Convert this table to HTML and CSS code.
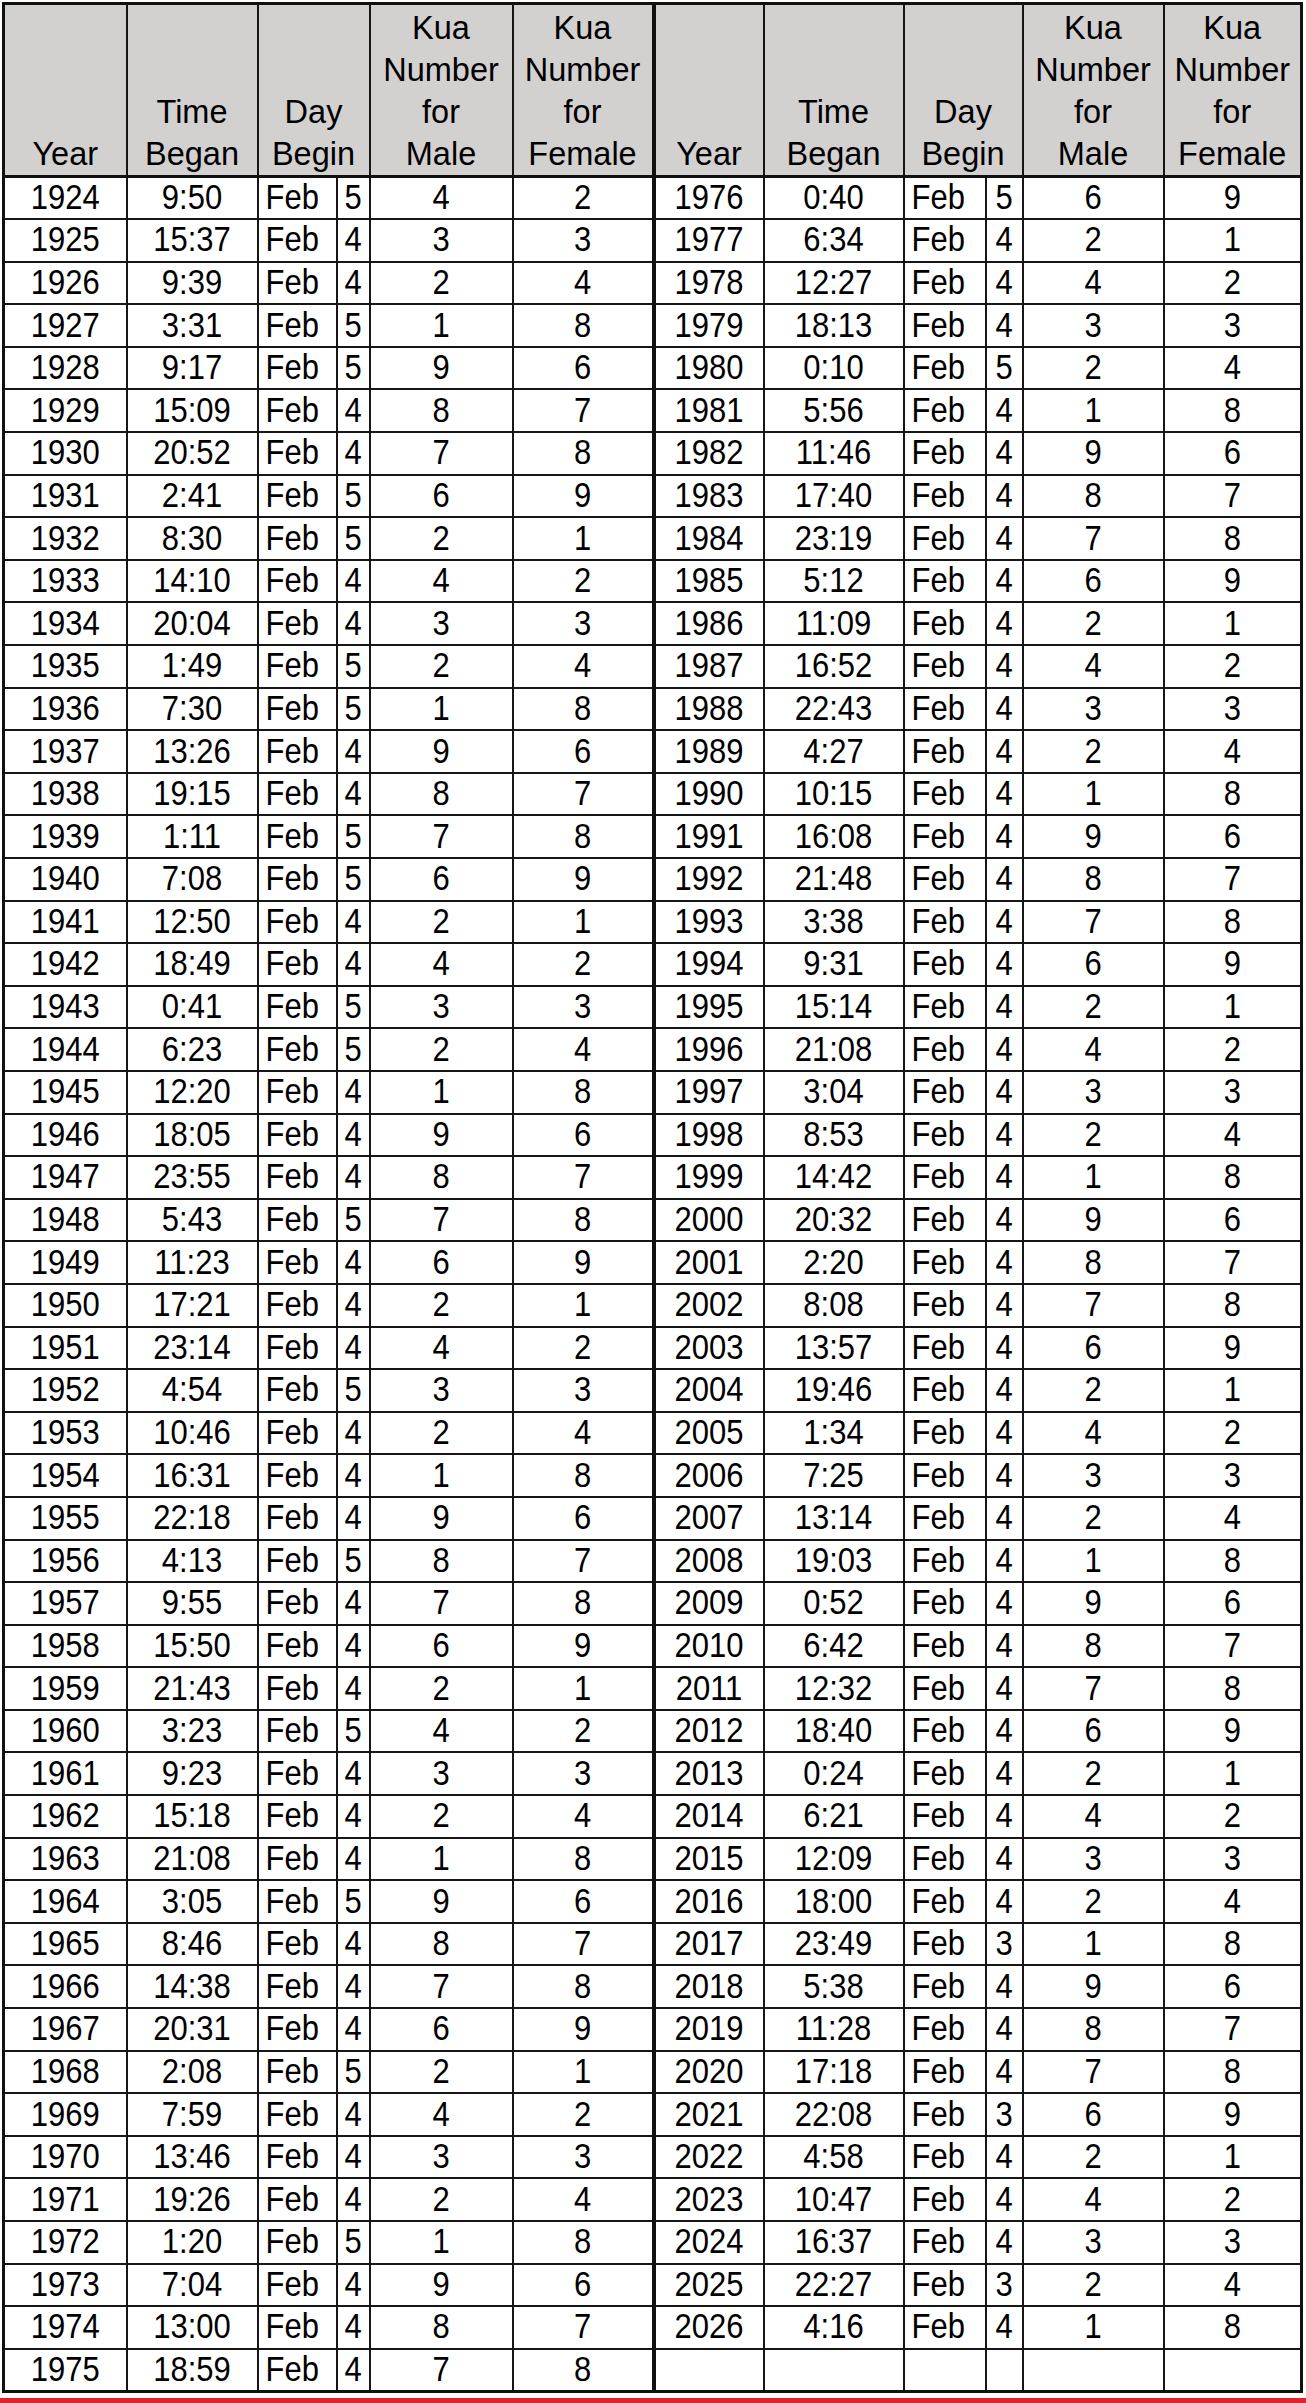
FILE: index.html
```html
<!DOCTYPE html>
<html>
<head>
<meta charset="utf-8">
<title>Kua Number Table</title>
<link rel="stylesheet" href="styles.css">
</head>
<body>
<div class="sheet">
<table class="kua">
<colgroup>
<col class="c-year1"><col class="c-time1"><col class="c-mon1"><col class="c-day1"><col class="c-km1"><col class="c-kf1">
<col class="c-year2"><col class="c-time2"><col class="c-mon2"><col class="c-day2"><col class="c-km2"><col class="c-kf2">
</colgroup>
<thead>
<tr class="head">
<th>Year</th><th>Time<br>Began</th><th colspan="2">Day<br>Begin</th><th>Kua<br>Number<br>for<br>Male</th><th>Kua<br>Number<br>for<br>Female</th>
<th class="rs">Year</th><th>Time<br>Began</th><th colspan="2">Day<br>Begin</th><th>Kua<br>Number<br>for<br>Male</th><th>Kua<br>Number<br>for<br>Female</th>
</tr>
</thead>
<tbody>
<tr><td><span class="v">1924</span></td><td><span class="v">9:50</span></td><td class="mon"><span class="v">Feb</span></td><td><span class="v">5</span></td><td><span class="v">4</span></td><td><span class="v">2</span></td><td class="rs"><span class="v">1976</span></td><td><span class="v">0:40</span></td><td class="mon"><span class="v">Feb</span></td><td><span class="v">5</span></td><td><span class="v">6</span></td><td><span class="v">9</span></td></tr>
<tr><td><span class="v">1925</span></td><td><span class="v">15:37</span></td><td class="mon"><span class="v">Feb</span></td><td><span class="v">4</span></td><td><span class="v">3</span></td><td><span class="v">3</span></td><td class="rs"><span class="v">1977</span></td><td><span class="v">6:34</span></td><td class="mon"><span class="v">Feb</span></td><td><span class="v">4</span></td><td><span class="v">2</span></td><td><span class="v">1</span></td></tr>
<tr><td><span class="v">1926</span></td><td><span class="v">9:39</span></td><td class="mon"><span class="v">Feb</span></td><td><span class="v">4</span></td><td><span class="v">2</span></td><td><span class="v">4</span></td><td class="rs"><span class="v">1978</span></td><td><span class="v">12:27</span></td><td class="mon"><span class="v">Feb</span></td><td><span class="v">4</span></td><td><span class="v">4</span></td><td><span class="v">2</span></td></tr>
<tr><td><span class="v">1927</span></td><td><span class="v">3:31</span></td><td class="mon"><span class="v">Feb</span></td><td><span class="v">5</span></td><td><span class="v">1</span></td><td><span class="v">8</span></td><td class="rs"><span class="v">1979</span></td><td><span class="v">18:13</span></td><td class="mon"><span class="v">Feb</span></td><td><span class="v">4</span></td><td><span class="v">3</span></td><td><span class="v">3</span></td></tr>
<tr><td><span class="v">1928</span></td><td><span class="v">9:17</span></td><td class="mon"><span class="v">Feb</span></td><td><span class="v">5</span></td><td><span class="v">9</span></td><td><span class="v">6</span></td><td class="rs"><span class="v">1980</span></td><td><span class="v">0:10</span></td><td class="mon"><span class="v">Feb</span></td><td><span class="v">5</span></td><td><span class="v">2</span></td><td><span class="v">4</span></td></tr>
<tr><td><span class="v">1929</span></td><td><span class="v">15:09</span></td><td class="mon"><span class="v">Feb</span></td><td><span class="v">4</span></td><td><span class="v">8</span></td><td><span class="v">7</span></td><td class="rs"><span class="v">1981</span></td><td><span class="v">5:56</span></td><td class="mon"><span class="v">Feb</span></td><td><span class="v">4</span></td><td><span class="v">1</span></td><td><span class="v">8</span></td></tr>
<tr><td><span class="v">1930</span></td><td><span class="v">20:52</span></td><td class="mon"><span class="v">Feb</span></td><td><span class="v">4</span></td><td><span class="v">7</span></td><td><span class="v">8</span></td><td class="rs"><span class="v">1982</span></td><td><span class="v">11:46</span></td><td class="mon"><span class="v">Feb</span></td><td><span class="v">4</span></td><td><span class="v">9</span></td><td><span class="v">6</span></td></tr>
<tr><td><span class="v">1931</span></td><td><span class="v">2:41</span></td><td class="mon"><span class="v">Feb</span></td><td><span class="v">5</span></td><td><span class="v">6</span></td><td><span class="v">9</span></td><td class="rs"><span class="v">1983</span></td><td><span class="v">17:40</span></td><td class="mon"><span class="v">Feb</span></td><td><span class="v">4</span></td><td><span class="v">8</span></td><td><span class="v">7</span></td></tr>
<tr><td><span class="v">1932</span></td><td><span class="v">8:30</span></td><td class="mon"><span class="v">Feb</span></td><td><span class="v">5</span></td><td><span class="v">2</span></td><td><span class="v">1</span></td><td class="rs"><span class="v">1984</span></td><td><span class="v">23:19</span></td><td class="mon"><span class="v">Feb</span></td><td><span class="v">4</span></td><td><span class="v">7</span></td><td><span class="v">8</span></td></tr>
<tr><td><span class="v">1933</span></td><td><span class="v">14:10</span></td><td class="mon"><span class="v">Feb</span></td><td><span class="v">4</span></td><td><span class="v">4</span></td><td><span class="v">2</span></td><td class="rs"><span class="v">1985</span></td><td><span class="v">5:12</span></td><td class="mon"><span class="v">Feb</span></td><td><span class="v">4</span></td><td><span class="v">6</span></td><td><span class="v">9</span></td></tr>
<tr><td><span class="v">1934</span></td><td><span class="v">20:04</span></td><td class="mon"><span class="v">Feb</span></td><td><span class="v">4</span></td><td><span class="v">3</span></td><td><span class="v">3</span></td><td class="rs"><span class="v">1986</span></td><td><span class="v">11:09</span></td><td class="mon"><span class="v">Feb</span></td><td><span class="v">4</span></td><td><span class="v">2</span></td><td><span class="v">1</span></td></tr>
<tr><td><span class="v">1935</span></td><td><span class="v">1:49</span></td><td class="mon"><span class="v">Feb</span></td><td><span class="v">5</span></td><td><span class="v">2</span></td><td><span class="v">4</span></td><td class="rs"><span class="v">1987</span></td><td><span class="v">16:52</span></td><td class="mon"><span class="v">Feb</span></td><td><span class="v">4</span></td><td><span class="v">4</span></td><td><span class="v">2</span></td></tr>
<tr><td><span class="v">1936</span></td><td><span class="v">7:30</span></td><td class="mon"><span class="v">Feb</span></td><td><span class="v">5</span></td><td><span class="v">1</span></td><td><span class="v">8</span></td><td class="rs"><span class="v">1988</span></td><td><span class="v">22:43</span></td><td class="mon"><span class="v">Feb</span></td><td><span class="v">4</span></td><td><span class="v">3</span></td><td><span class="v">3</span></td></tr>
<tr><td><span class="v">1937</span></td><td><span class="v">13:26</span></td><td class="mon"><span class="v">Feb</span></td><td><span class="v">4</span></td><td><span class="v">9</span></td><td><span class="v">6</span></td><td class="rs"><span class="v">1989</span></td><td><span class="v">4:27</span></td><td class="mon"><span class="v">Feb</span></td><td><span class="v">4</span></td><td><span class="v">2</span></td><td><span class="v">4</span></td></tr>
<tr><td><span class="v">1938</span></td><td><span class="v">19:15</span></td><td class="mon"><span class="v">Feb</span></td><td><span class="v">4</span></td><td><span class="v">8</span></td><td><span class="v">7</span></td><td class="rs"><span class="v">1990</span></td><td><span class="v">10:15</span></td><td class="mon"><span class="v">Feb</span></td><td><span class="v">4</span></td><td><span class="v">1</span></td><td><span class="v">8</span></td></tr>
<tr><td><span class="v">1939</span></td><td><span class="v">1:11</span></td><td class="mon"><span class="v">Feb</span></td><td><span class="v">5</span></td><td><span class="v">7</span></td><td><span class="v">8</span></td><td class="rs"><span class="v">1991</span></td><td><span class="v">16:08</span></td><td class="mon"><span class="v">Feb</span></td><td><span class="v">4</span></td><td><span class="v">9</span></td><td><span class="v">6</span></td></tr>
<tr><td><span class="v">1940</span></td><td><span class="v">7:08</span></td><td class="mon"><span class="v">Feb</span></td><td><span class="v">5</span></td><td><span class="v">6</span></td><td><span class="v">9</span></td><td class="rs"><span class="v">1992</span></td><td><span class="v">21:48</span></td><td class="mon"><span class="v">Feb</span></td><td><span class="v">4</span></td><td><span class="v">8</span></td><td><span class="v">7</span></td></tr>
<tr><td><span class="v">1941</span></td><td><span class="v">12:50</span></td><td class="mon"><span class="v">Feb</span></td><td><span class="v">4</span></td><td><span class="v">2</span></td><td><span class="v">1</span></td><td class="rs"><span class="v">1993</span></td><td><span class="v">3:38</span></td><td class="mon"><span class="v">Feb</span></td><td><span class="v">4</span></td><td><span class="v">7</span></td><td><span class="v">8</span></td></tr>
<tr><td><span class="v">1942</span></td><td><span class="v">18:49</span></td><td class="mon"><span class="v">Feb</span></td><td><span class="v">4</span></td><td><span class="v">4</span></td><td><span class="v">2</span></td><td class="rs"><span class="v">1994</span></td><td><span class="v">9:31</span></td><td class="mon"><span class="v">Feb</span></td><td><span class="v">4</span></td><td><span class="v">6</span></td><td><span class="v">9</span></td></tr>
<tr><td><span class="v">1943</span></td><td><span class="v">0:41</span></td><td class="mon"><span class="v">Feb</span></td><td><span class="v">5</span></td><td><span class="v">3</span></td><td><span class="v">3</span></td><td class="rs"><span class="v">1995</span></td><td><span class="v">15:14</span></td><td class="mon"><span class="v">Feb</span></td><td><span class="v">4</span></td><td><span class="v">2</span></td><td><span class="v">1</span></td></tr>
<tr><td><span class="v">1944</span></td><td><span class="v">6:23</span></td><td class="mon"><span class="v">Feb</span></td><td><span class="v">5</span></td><td><span class="v">2</span></td><td><span class="v">4</span></td><td class="rs"><span class="v">1996</span></td><td><span class="v">21:08</span></td><td class="mon"><span class="v">Feb</span></td><td><span class="v">4</span></td><td><span class="v">4</span></td><td><span class="v">2</span></td></tr>
<tr><td><span class="v">1945</span></td><td><span class="v">12:20</span></td><td class="mon"><span class="v">Feb</span></td><td><span class="v">4</span></td><td><span class="v">1</span></td><td><span class="v">8</span></td><td class="rs"><span class="v">1997</span></td><td><span class="v">3:04</span></td><td class="mon"><span class="v">Feb</span></td><td><span class="v">4</span></td><td><span class="v">3</span></td><td><span class="v">3</span></td></tr>
<tr><td><span class="v">1946</span></td><td><span class="v">18:05</span></td><td class="mon"><span class="v">Feb</span></td><td><span class="v">4</span></td><td><span class="v">9</span></td><td><span class="v">6</span></td><td class="rs"><span class="v">1998</span></td><td><span class="v">8:53</span></td><td class="mon"><span class="v">Feb</span></td><td><span class="v">4</span></td><td><span class="v">2</span></td><td><span class="v">4</span></td></tr>
<tr><td><span class="v">1947</span></td><td><span class="v">23:55</span></td><td class="mon"><span class="v">Feb</span></td><td><span class="v">4</span></td><td><span class="v">8</span></td><td><span class="v">7</span></td><td class="rs"><span class="v">1999</span></td><td><span class="v">14:42</span></td><td class="mon"><span class="v">Feb</span></td><td><span class="v">4</span></td><td><span class="v">1</span></td><td><span class="v">8</span></td></tr>
<tr><td><span class="v">1948</span></td><td><span class="v">5:43</span></td><td class="mon"><span class="v">Feb</span></td><td><span class="v">5</span></td><td><span class="v">7</span></td><td><span class="v">8</span></td><td class="rs"><span class="v">2000</span></td><td><span class="v">20:32</span></td><td class="mon"><span class="v">Feb</span></td><td><span class="v">4</span></td><td><span class="v">9</span></td><td><span class="v">6</span></td></tr>
<tr><td><span class="v">1949</span></td><td><span class="v">11:23</span></td><td class="mon"><span class="v">Feb</span></td><td><span class="v">4</span></td><td><span class="v">6</span></td><td><span class="v">9</span></td><td class="rs"><span class="v">2001</span></td><td><span class="v">2:20</span></td><td class="mon"><span class="v">Feb</span></td><td><span class="v">4</span></td><td><span class="v">8</span></td><td><span class="v">7</span></td></tr>
<tr><td><span class="v">1950</span></td><td><span class="v">17:21</span></td><td class="mon"><span class="v">Feb</span></td><td><span class="v">4</span></td><td><span class="v">2</span></td><td><span class="v">1</span></td><td class="rs"><span class="v">2002</span></td><td><span class="v">8:08</span></td><td class="mon"><span class="v">Feb</span></td><td><span class="v">4</span></td><td><span class="v">7</span></td><td><span class="v">8</span></td></tr>
<tr><td><span class="v">1951</span></td><td><span class="v">23:14</span></td><td class="mon"><span class="v">Feb</span></td><td><span class="v">4</span></td><td><span class="v">4</span></td><td><span class="v">2</span></td><td class="rs"><span class="v">2003</span></td><td><span class="v">13:57</span></td><td class="mon"><span class="v">Feb</span></td><td><span class="v">4</span></td><td><span class="v">6</span></td><td><span class="v">9</span></td></tr>
<tr><td><span class="v">1952</span></td><td><span class="v">4:54</span></td><td class="mon"><span class="v">Feb</span></td><td><span class="v">5</span></td><td><span class="v">3</span></td><td><span class="v">3</span></td><td class="rs"><span class="v">2004</span></td><td><span class="v">19:46</span></td><td class="mon"><span class="v">Feb</span></td><td><span class="v">4</span></td><td><span class="v">2</span></td><td><span class="v">1</span></td></tr>
<tr><td><span class="v">1953</span></td><td><span class="v">10:46</span></td><td class="mon"><span class="v">Feb</span></td><td><span class="v">4</span></td><td><span class="v">2</span></td><td><span class="v">4</span></td><td class="rs"><span class="v">2005</span></td><td><span class="v">1:34</span></td><td class="mon"><span class="v">Feb</span></td><td><span class="v">4</span></td><td><span class="v">4</span></td><td><span class="v">2</span></td></tr>
<tr><td><span class="v">1954</span></td><td><span class="v">16:31</span></td><td class="mon"><span class="v">Feb</span></td><td><span class="v">4</span></td><td><span class="v">1</span></td><td><span class="v">8</span></td><td class="rs"><span class="v">2006</span></td><td><span class="v">7:25</span></td><td class="mon"><span class="v">Feb</span></td><td><span class="v">4</span></td><td><span class="v">3</span></td><td><span class="v">3</span></td></tr>
<tr><td><span class="v">1955</span></td><td><span class="v">22:18</span></td><td class="mon"><span class="v">Feb</span></td><td><span class="v">4</span></td><td><span class="v">9</span></td><td><span class="v">6</span></td><td class="rs"><span class="v">2007</span></td><td><span class="v">13:14</span></td><td class="mon"><span class="v">Feb</span></td><td><span class="v">4</span></td><td><span class="v">2</span></td><td><span class="v">4</span></td></tr>
<tr><td><span class="v">1956</span></td><td><span class="v">4:13</span></td><td class="mon"><span class="v">Feb</span></td><td><span class="v">5</span></td><td><span class="v">8</span></td><td><span class="v">7</span></td><td class="rs"><span class="v">2008</span></td><td><span class="v">19:03</span></td><td class="mon"><span class="v">Feb</span></td><td><span class="v">4</span></td><td><span class="v">1</span></td><td><span class="v">8</span></td></tr>
<tr><td><span class="v">1957</span></td><td><span class="v">9:55</span></td><td class="mon"><span class="v">Feb</span></td><td><span class="v">4</span></td><td><span class="v">7</span></td><td><span class="v">8</span></td><td class="rs"><span class="v">2009</span></td><td><span class="v">0:52</span></td><td class="mon"><span class="v">Feb</span></td><td><span class="v">4</span></td><td><span class="v">9</span></td><td><span class="v">6</span></td></tr>
<tr><td><span class="v">1958</span></td><td><span class="v">15:50</span></td><td class="mon"><span class="v">Feb</span></td><td><span class="v">4</span></td><td><span class="v">6</span></td><td><span class="v">9</span></td><td class="rs"><span class="v">2010</span></td><td><span class="v">6:42</span></td><td class="mon"><span class="v">Feb</span></td><td><span class="v">4</span></td><td><span class="v">8</span></td><td><span class="v">7</span></td></tr>
<tr><td><span class="v">1959</span></td><td><span class="v">21:43</span></td><td class="mon"><span class="v">Feb</span></td><td><span class="v">4</span></td><td><span class="v">2</span></td><td><span class="v">1</span></td><td class="rs"><span class="v">2011</span></td><td><span class="v">12:32</span></td><td class="mon"><span class="v">Feb</span></td><td><span class="v">4</span></td><td><span class="v">7</span></td><td><span class="v">8</span></td></tr>
<tr><td><span class="v">1960</span></td><td><span class="v">3:23</span></td><td class="mon"><span class="v">Feb</span></td><td><span class="v">5</span></td><td><span class="v">4</span></td><td><span class="v">2</span></td><td class="rs"><span class="v">2012</span></td><td><span class="v">18:40</span></td><td class="mon"><span class="v">Feb</span></td><td><span class="v">4</span></td><td><span class="v">6</span></td><td><span class="v">9</span></td></tr>
<tr><td><span class="v">1961</span></td><td><span class="v">9:23</span></td><td class="mon"><span class="v">Feb</span></td><td><span class="v">4</span></td><td><span class="v">3</span></td><td><span class="v">3</span></td><td class="rs"><span class="v">2013</span></td><td><span class="v">0:24</span></td><td class="mon"><span class="v">Feb</span></td><td><span class="v">4</span></td><td><span class="v">2</span></td><td><span class="v">1</span></td></tr>
<tr><td><span class="v">1962</span></td><td><span class="v">15:18</span></td><td class="mon"><span class="v">Feb</span></td><td><span class="v">4</span></td><td><span class="v">2</span></td><td><span class="v">4</span></td><td class="rs"><span class="v">2014</span></td><td><span class="v">6:21</span></td><td class="mon"><span class="v">Feb</span></td><td><span class="v">4</span></td><td><span class="v">4</span></td><td><span class="v">2</span></td></tr>
<tr><td><span class="v">1963</span></td><td><span class="v">21:08</span></td><td class="mon"><span class="v">Feb</span></td><td><span class="v">4</span></td><td><span class="v">1</span></td><td><span class="v">8</span></td><td class="rs"><span class="v">2015</span></td><td><span class="v">12:09</span></td><td class="mon"><span class="v">Feb</span></td><td><span class="v">4</span></td><td><span class="v">3</span></td><td><span class="v">3</span></td></tr>
<tr><td><span class="v">1964</span></td><td><span class="v">3:05</span></td><td class="mon"><span class="v">Feb</span></td><td><span class="v">5</span></td><td><span class="v">9</span></td><td><span class="v">6</span></td><td class="rs"><span class="v">2016</span></td><td><span class="v">18:00</span></td><td class="mon"><span class="v">Feb</span></td><td><span class="v">4</span></td><td><span class="v">2</span></td><td><span class="v">4</span></td></tr>
<tr><td><span class="v">1965</span></td><td><span class="v">8:46</span></td><td class="mon"><span class="v">Feb</span></td><td><span class="v">4</span></td><td><span class="v">8</span></td><td><span class="v">7</span></td><td class="rs"><span class="v">2017</span></td><td><span class="v">23:49</span></td><td class="mon"><span class="v">Feb</span></td><td><span class="v">3</span></td><td><span class="v">1</span></td><td><span class="v">8</span></td></tr>
<tr><td><span class="v">1966</span></td><td><span class="v">14:38</span></td><td class="mon"><span class="v">Feb</span></td><td><span class="v">4</span></td><td><span class="v">7</span></td><td><span class="v">8</span></td><td class="rs"><span class="v">2018</span></td><td><span class="v">5:38</span></td><td class="mon"><span class="v">Feb</span></td><td><span class="v">4</span></td><td><span class="v">9</span></td><td><span class="v">6</span></td></tr>
<tr><td><span class="v">1967</span></td><td><span class="v">20:31</span></td><td class="mon"><span class="v">Feb</span></td><td><span class="v">4</span></td><td><span class="v">6</span></td><td><span class="v">9</span></td><td class="rs"><span class="v">2019</span></td><td><span class="v">11:28</span></td><td class="mon"><span class="v">Feb</span></td><td><span class="v">4</span></td><td><span class="v">8</span></td><td><span class="v">7</span></td></tr>
<tr><td><span class="v">1968</span></td><td><span class="v">2:08</span></td><td class="mon"><span class="v">Feb</span></td><td><span class="v">5</span></td><td><span class="v">2</span></td><td><span class="v">1</span></td><td class="rs"><span class="v">2020</span></td><td><span class="v">17:18</span></td><td class="mon"><span class="v">Feb</span></td><td><span class="v">4</span></td><td><span class="v">7</span></td><td><span class="v">8</span></td></tr>
<tr><td><span class="v">1969</span></td><td><span class="v">7:59</span></td><td class="mon"><span class="v">Feb</span></td><td><span class="v">4</span></td><td><span class="v">4</span></td><td><span class="v">2</span></td><td class="rs"><span class="v">2021</span></td><td><span class="v">22:08</span></td><td class="mon"><span class="v">Feb</span></td><td><span class="v">3</span></td><td><span class="v">6</span></td><td><span class="v">9</span></td></tr>
<tr><td><span class="v">1970</span></td><td><span class="v">13:46</span></td><td class="mon"><span class="v">Feb</span></td><td><span class="v">4</span></td><td><span class="v">3</span></td><td><span class="v">3</span></td><td class="rs"><span class="v">2022</span></td><td><span class="v">4:58</span></td><td class="mon"><span class="v">Feb</span></td><td><span class="v">4</span></td><td><span class="v">2</span></td><td><span class="v">1</span></td></tr>
<tr><td><span class="v">1971</span></td><td><span class="v">19:26</span></td><td class="mon"><span class="v">Feb</span></td><td><span class="v">4</span></td><td><span class="v">2</span></td><td><span class="v">4</span></td><td class="rs"><span class="v">2023</span></td><td><span class="v">10:47</span></td><td class="mon"><span class="v">Feb</span></td><td><span class="v">4</span></td><td><span class="v">4</span></td><td><span class="v">2</span></td></tr>
<tr><td><span class="v">1972</span></td><td><span class="v">1:20</span></td><td class="mon"><span class="v">Feb</span></td><td><span class="v">5</span></td><td><span class="v">1</span></td><td><span class="v">8</span></td><td class="rs"><span class="v">2024</span></td><td><span class="v">16:37</span></td><td class="mon"><span class="v">Feb</span></td><td><span class="v">4</span></td><td><span class="v">3</span></td><td><span class="v">3</span></td></tr>
<tr><td><span class="v">1973</span></td><td><span class="v">7:04</span></td><td class="mon"><span class="v">Feb</span></td><td><span class="v">4</span></td><td><span class="v">9</span></td><td><span class="v">6</span></td><td class="rs"><span class="v">2025</span></td><td><span class="v">22:27</span></td><td class="mon"><span class="v">Feb</span></td><td><span class="v">3</span></td><td><span class="v">2</span></td><td><span class="v">4</span></td></tr>
<tr><td><span class="v">1974</span></td><td><span class="v">13:00</span></td><td class="mon"><span class="v">Feb</span></td><td><span class="v">4</span></td><td><span class="v">8</span></td><td><span class="v">7</span></td><td class="rs"><span class="v">2026</span></td><td><span class="v">4:16</span></td><td class="mon"><span class="v">Feb</span></td><td><span class="v">4</span></td><td><span class="v">1</span></td><td><span class="v">8</span></td></tr>
<tr><td><span class="v">1975</span></td><td><span class="v">18:59</span></td><td class="mon"><span class="v">Feb</span></td><td><span class="v">4</span></td><td><span class="v">7</span></td><td><span class="v">8</span></td><td class="rs"></td><td></td><td class="mon"></td><td></td><td></td><td></td></tr>
</tbody>
</table>
</div>
<div class="band"></div>
</body>
</html>
```

FILE: styles.css
```css
html, body {
  margin: 0;
  padding: 0;
  background: #ffffff;
}

body {
  font-family: "Liberation Sans", Arial, sans-serif;
  color: #000000;
}

.sheet {
  padding: 2px 0 0 2px;
}

.kua {
  border-collapse: collapse;
  table-layout: fixed;
  width: 1300px;
  border: 3px solid #111111;
}

.c-year1 { width: 123px; }
.c-time1 { width: 131px; }
.c-mon1 { width: 79px; }
.c-day1 { width: 33px; }
.c-km1 { width: 143px; }
.c-kf1 { width: 141px; }
.c-year2 { width: 110px; }
.c-time2 { width: 140px; }
.c-mon2 { width: 82px; }
.c-day2 { width: 37px; }
.c-km2 { width: 141px; }
.c-kf2 { width: 138px; }

.kua th,
.kua td {
  border: 2px solid #161616;
  padding: 0;
  font-weight: normal;
  text-align: center;
  white-space: nowrap;
  overflow: hidden;
}

.kua th {
  background: #d3d0d0;
  vertical-align: bottom;
  font-size: 32.5px;
  line-height: 42px;
  padding-bottom: 0;
}

.kua .head {
  height: 173px;
}

.kua thead th {
  border-bottom: 3px solid #111111;
}

.kua tbody tr {
  height: 42.6px;
}

.kua td {
  vertical-align: middle;
  font-size: 31px;
  line-height: 36px;
}

.kua .v {
  display: inline-block;
  transform: scaleY(1.12);
}

.kua .mon {
  text-align: left;
  padding-left: 7px;
}

.kua .rs {
  border-left: 4px solid #111111;
}

.band {
  height: 12px;
  margin-top: 5px;
  background: #e5202a;
}
```
